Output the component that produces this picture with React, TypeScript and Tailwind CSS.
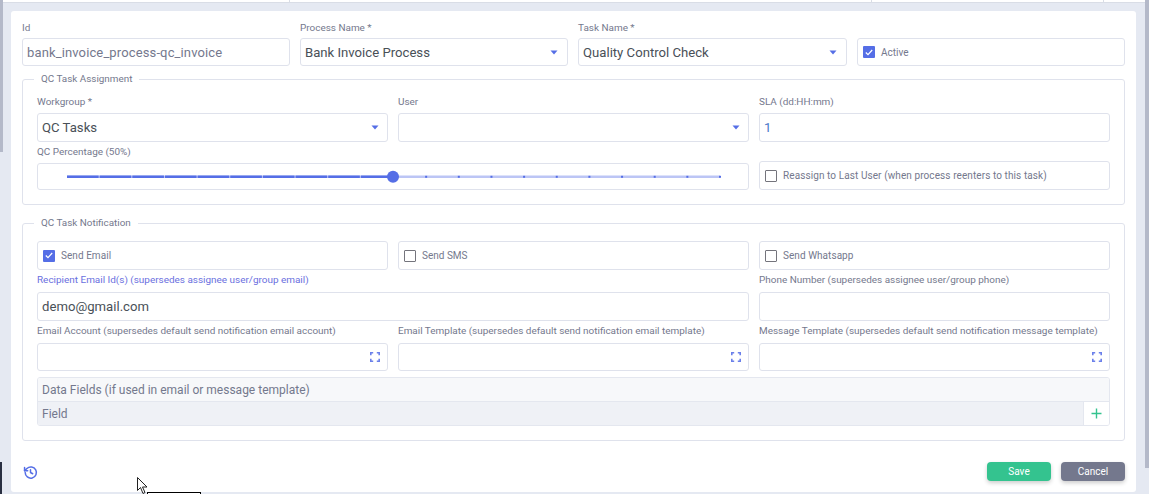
import React from "react";

const labelC = "text-[9.95px] leading-[12px] text-[#74788d] whitespace-nowrap";
const box = "border border-[#dfe2ec] rounded-[3px] bg-white";

function Caret() {
  return (
    <svg width="8" height="5" viewBox="0 0 8 5" className="shrink-0">
      <path d="M0.5 0.5h7L4 4.5z" fill="#556ee6" />
    </svg>
  );
}

function Expand() {
  return (
    <svg width="10" height="10" viewBox="0 0 10 10" fill="none" stroke="#6b80ea" strokeWidth="1.6" className="shrink-0">
      <path d="M0.8 3.2V.8H3.2M6.8.8h2.4V3.2M9.2 6.8v2.4H6.8M3.2 9.2H.8V6.8" />
    </svg>
  );
}

function Check({ on, label, className }: { on?: boolean; label: string; className?: string }) {
  return (
    <div className="flex items-center gap-[6px] h-full pl-[5px]">
      {on ? (
        <span className="w-[12px] h-[12px] rounded-[1px] bg-[#556ee6] flex items-center justify-center">
          <svg width="8" height="7" viewBox="0 0 8 7" fill="none" stroke="#fff" strokeWidth="1.2">
            <path d="M0.8 3.5 3 5.7 7.2 1" />
          </svg>
        </span>
      ) : (
        <span className="w-[12px] h-[12px] rounded-[1px] border border-[#74747c] bg-white" />
      )}
      <span className={"text-[10px] text-[#74788d] whitespace-nowrap " + (className ?? "")}>{label}</span>
    </div>
  );
}

function Field({ label, labelClass, children, className }: { label: string; labelClass?: string; children: React.ReactNode; className?: string }) {
  return (
    <div className={"flex flex-col " + (className ?? "")}>
      <label className={labelC + " " + (labelClass ?? "mb-[5px]")}>{label}</label>
      {children}
    </div>
  );
}

function Value({ children, caret, expand, className, pad }: { children?: React.ReactNode; caret?: boolean; expand?: boolean; className?: string; pad?: string }) {
  return (
    <div className={box + " flex items-center justify-between pl-[4px] text-[13.15px] text-[#495057] " + (pad ?? "pr-[8px] ") + " " + (className ?? "h-[29px]")}>
      <span className="whitespace-nowrap pt-[1px]">{children}</span>
      {caret && <Caret />}
      {expand && <Expand />}
    </div>
  );
}

function Slider() {
  const x0 = 29;
  const step = 32.65;
  const ticks = Array.from({ length: 21 }, (_, i) => x0 + i * step);
  return (
    <svg width="700" height="25" viewBox="0 0 700 25" className="block">
      <line x1={x0} x2={682} y1="12.8" y2="12.8" stroke="#bcc5f5" strokeWidth="2.4" />
      {ticks.slice(0, 10).map((t) => (
        <line key={t} x1={t} x2={t + step - 1} y1="12.8" y2="12.8" stroke="#556ee6" strokeWidth="2.4" />
      ))}
      {ticks.slice(11).map((t) => (
        <rect key={t} x={t - 1} y="11.8" width="2" height="2" fill="#556ee6" />
      ))}
      <circle cx={355} cy="12.8" r="6" fill="#556ee6" />
    </svg>
  );
}

function HistoryIcon() {
  return (
    <svg width="15" height="15" viewBox="0 0 24 24" fill="none" stroke="#556ee6" strokeWidth="2.4" strokeLinecap="round" strokeLinejoin="round">
      <path d="M3.5 12a9 9 0 1 0 2.8-6.5L2.5 9" />
      <path d="M2.5 4v5h5" />
      <path d="M12 7.5V12l3.5 2" />
    </svg>
  );
}

function Cursor() {
  return (
    <div className="absolute left-[137px] top-[477px] pointer-events-none">
      <svg width="14" height="18" viewBox="0 0 14 18">
        <path d="M0.5 0.5v13l3-3 2.5 6 2-1-2.5-5.5H10z" fill="#fff" stroke="#222" strokeWidth="1" />
      </svg>
    </div>
  );
}

export default function App() {
  return (
    <div className="relative w-[1149px] h-[494px] overflow-hidden bg-[#e5e9f2] pt-[11px] pl-[11px] font-['Roboto',sans-serif]">
      <div className="absolute left-0 right-0 top-0 h-[3px] bg-white border-b border-[#d9dde6]" />
      <div className="absolute left-[289px] top-0 w-px h-[2px] bg-[#d9dde6]" />
      <div className="absolute left-[871px] top-0 w-px h-[2px] bg-[#d9dde6]" />
      <div className="absolute left-[1103px] top-0 w-px h-[2px] bg-[#d9dde6]" />
      <div className="absolute left-0 top-0 w-[3px] h-[152px] bg-[#b4b9c9]" />
      <div className="absolute left-0 top-[462px] w-[2px] h-[32px] bg-[#2a3042]" />
      <div className="absolute right-0 top-0 w-[4px] h-[468px] bg-[#b4b9c9]" />

      <div className="w-[1125px] h-[481px] bg-white rounded-[3px] pt-[11px] px-[11px]">
        <div className="grid grid-cols-[268px_268px_269px_268px] gap-x-[10px] w-[1103px]">
          <Field label="Id" labelClass="mb-[4px]">
            <div className={box + " flex items-center pl-[4px] pt-[1px] h-[28px] text-[13px] tracking-[0.13px] text-[#74788d] whitespace-nowrap"}>bank_invoice_process-qc_invoice</div>
          </Field>
          <Field label="Process Name *" labelClass="mb-[4px]">
            <Value caret className="h-[28px]" pad="pr-[9px]">Bank Invoice Process</Value>
          </Field>
          <Field label="Task Name *" labelClass="mb-[4px]">
            <Value caret className="h-[28px]" pad="pr-[9px]">Quality Control Check</Value>
          </Field>
          <div className="flex flex-col justify-end">
            <div className={box + " h-[28px]"}>
              <Check on label="Active" />
            </div>
          </div>
        </div>

        <fieldset className="mt-[7px] w-[1103px] h-[132px] border border-[#dfe2ec] rounded-[3px] px-[14px]">
          <legend className="-ml-[3px] px-[7px] text-[9.9px] leading-[12px] text-[#74788d]">QC Task Assignment</legend>
          <div className="grid grid-cols-3 gap-x-[10px] mt-[11px]">
            <Field label="Workgroup *" labelClass="mb-[5px]">
              <Value caret>QC Tasks</Value>
            </Field>
            <Field label="User" labelClass="mb-[5px]">
              <Value caret />
            </Field>
            <Field label="SLA (dd:HH:mm)" labelClass="mb-[5px]">
              <Value className="h-[29px] !text-[#4a78c9]">1</Value>
            </Field>
          </div>
          <div className="grid grid-cols-3 gap-x-[10px] mt-[4px]">
            <div className="col-span-2 flex flex-col">
              <label className={labelC + " mb-[5px]"}>QC Percentage (50%)</label>
              <div className={box + " h-[27px] overflow-hidden"}>
                <Slider />
              </div>
            </div>
            <div className="flex flex-col justify-end">
              <div className={box + " h-[29px]"}>
                <Check label="Reassign to Last User (when process reenters to this task)" className="tracking-[0.09px]" />
              </div>
            </div>
          </div>
        </fieldset>

        <fieldset className="mt-[12px] w-[1103px] h-[224px] border border-[#dfe2ec] rounded-[3px] px-[14px]">
          <legend className="-ml-[3px] px-[7px] text-[9.9px] leading-[12px] text-[#74788d]">QC Task Notification</legend>
          <div className="grid grid-cols-3 gap-x-[10px] mt-[12px]">
            <div className={box + " h-[29px]"}><Check on label="Send Email" className="tracking-[0.05px]" /></div>
            <div className={box + " h-[29px]"}><Check label="Send SMS" /></div>
            <div className={box + " h-[29px]"}><Check label="Send Whatsapp" className="tracking-[0.05px]" /></div>
          </div>
          <div className="grid grid-cols-3 gap-x-[10px] mt-[4px]">
            <Field label="Recipient Email Id(s) (supersedes assignee user/group email)" labelClass="mb-[6px] !text-[#6a6fe0]" className="col-span-2">
              <Value>demo@gmail.com</Value>
            </Field>
            <Field label="Phone Number (supersedes assignee user/group phone)" labelClass="mb-[6px]">
              <Value />
            </Field>
          </div>
          <div className="grid grid-cols-3 gap-x-[10px] mt-[4px]">
            <Field label="Email Account (supersedes default send notification email account)" labelClass="mb-[6px]">
              <Value expand className="h-[28px]" pad="pr-[7px]" />
            </Field>
            <Field label="Email Template (supersedes default send notification email template)" labelClass="mb-[6px]">
              <Value expand className="h-[28px]" pad="pr-[7px]" />
            </Field>
            <Field label="Message Template (supersedes default send notification message template)" labelClass="mb-[6px]">
              <Value expand className="h-[28px]" pad="pr-[7px]" />
            </Field>
          </div>
          <div className="mt-[6px] border border-[#e4e7ef] rounded-[3px] overflow-hidden text-[12px] text-[#74788d]">
            <div className="h-[24px] bg-[#f7f8fa] border-b border-[#e4e7ef] flex items-center pl-[4px]">Data Fields (if used in email or message template)</div>
            <div className="h-[23px] bg-[#eff1f6] flex items-center justify-between pl-[4px]">
              <span>Field</span>
              <div className="w-[26px] h-full bg-white border-l border-[#e4e7ef] flex items-center justify-center">
                <svg width="11" height="11" viewBox="0 0 11 11" stroke="#34c38f" strokeWidth="1.4">
                  <path d="M5.5 0.5v10M0.5 5.5h10" />
                </svg>
              </div>
            </div>
          </div>
        </fieldset>

        <div className="flex items-center justify-between w-[1103px] mt-[21px]">
          <div className="pl-[1px] pt-[2px]"><HistoryIcon /></div>
          <div className="flex gap-[10px]">
            <button className="w-[64px] h-[19px] rounded-[4px] bg-[#34c38f] text-white text-[10px] shadow-[0_2px_4px_rgba(0,0,0,0.2)]">Save</button>
            <button className="w-[64px] h-[19px] rounded-[4px] bg-[#74788d] text-white text-[10px] shadow-[0_2px_4px_rgba(0,0,0,0.2)]">Cancel</button>
          </div>
        </div>
      </div>
      <Cursor />
      <div className="absolute left-[147px] top-[492px] w-[54px] h-[6px] border border-black bg-white" />
    </div>
  );
}
